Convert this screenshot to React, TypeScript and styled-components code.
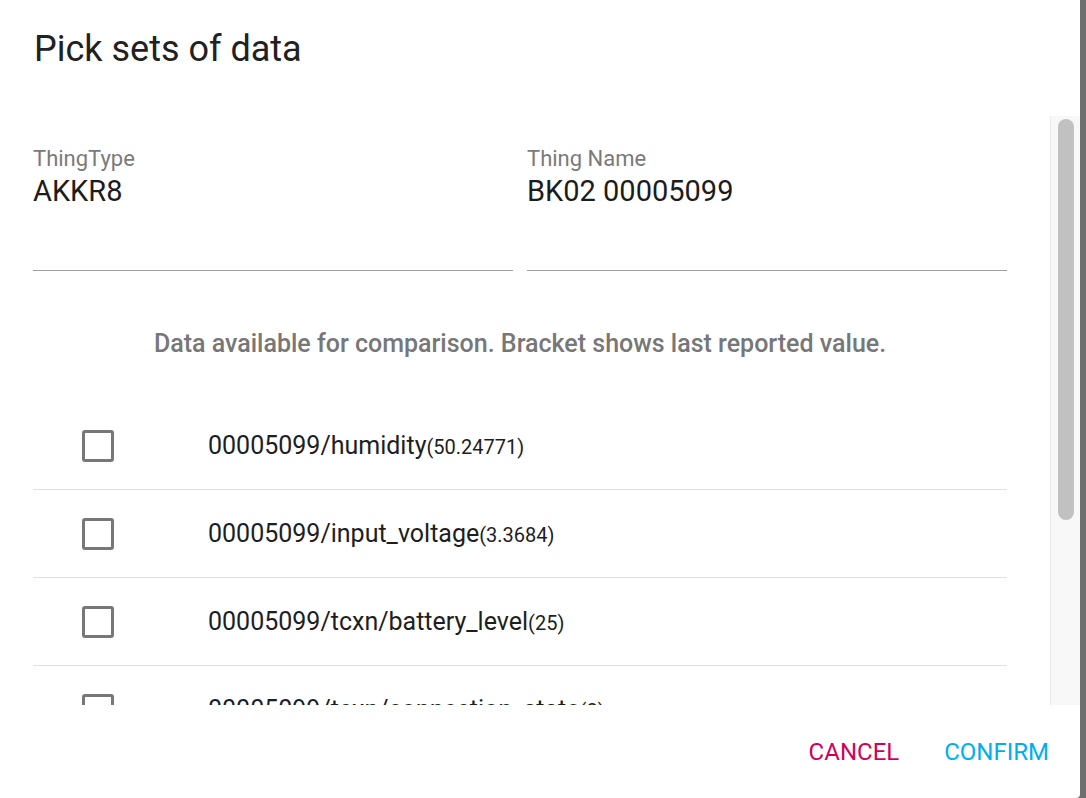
import React from "react";
import styled, { createGlobalStyle } from "styled-components";

const GlobalStyle = createGlobalStyle`
  html, body {
    margin: 0;
    padding: 0;
    height: 100%;
    background: #6f6f6f;
    overflow: hidden;
  }
  body {
    font-family: Roboto, "Noto Sans", sans-serif;
  }
`;

const Dialog = styled.div`
  width: 1080px;
  height: 798px;
  background: #ffffff;
  display: flex;
  flex-direction: column;
  border-bottom-right-radius: 4px;
`;

const Header = styled.div`
  height: 116px;
  flex: none;
  box-sizing: border-box;
  padding: 28px 34px 0;
`;

const Title = styled.h2`
  margin: 0;
  font-size: 36px;
  font-weight: 400;
  line-height: 1.2;
  color: #212121;
`;

const Body = styled.div`
  flex: 1;
  min-height: 0;
  display: flex;
`;

const ScrollArea = styled.div`
  flex: 1;
  min-width: 0;
  overflow-y: scroll;
  scrollbar-width: none;
  box-sizing: border-box;
  padding: 30px 43px 54px 33px;

  &::-webkit-scrollbar {
    display: none;
  }
`;

const Rail = styled.div`
  width: 30px;
  flex: none;
  box-sizing: border-box;
  background: #f8f8f8;
  border-left: 1px solid #ececec;
  padding: 3px 6px 0 7px;
`;

const Thumb = styled.div`
  height: 401px;
  border-radius: 8px;
  background: #c1c1c1;
`;

const Fields = styled.div`
  display: grid;
  grid-template-columns: 1fr 1fr;
  column-gap: 14px;
`;

const Field = styled.div`
  height: 124px;
  border-bottom: 1px solid #9e9e9e;
`;

const Label = styled.div`
  font-size: 22px;
  line-height: 1.2;
  color: #7a7a7a;
`;

const Value = styled.div`
  margin-top: 2px;
  font-size: 29px;
  line-height: 1.2;
  color: #1c1c1c;
`;

const Note = styled.p`
  margin: 58px 0 43px;
  text-align: center;
  font-size: 25px;
  font-weight: 500;
  line-height: 1.2;
  color: #777777;
`;

const Row = styled.label`
  display: flex;
  align-items: center;
  height: 88px;
  box-sizing: border-box;
  padding-left: 49px;
  border-bottom: 1px solid #e2e2e2;
`;

const Box = styled.span`
  width: 32px;
  height: 32px;
  flex: none;
  box-sizing: border-box;
  border: 3px solid #777777;
  border-radius: 3px;
`;

const Name = styled.span`
  margin-left: 94px;
  font-size: 25px;
  color: #1e1e1e;
`;

const Reading = styled.span`
  font-size: 20px;
`;

const Footer = styled.div`
  height: 93px;
  flex: none;
  box-sizing: border-box;
  padding: 33px 31px 0 0;
  display: flex;
  justify-content: flex-end;
  gap: 45px;
`;

const Action = styled.button<{ $tone: string }>`
  background: transparent;
  border: none;
  padding: 0;
  font-family: inherit;
  font-size: 24px;
  line-height: 1.2;
  height: 29px;
  color: ${(p) => p.$tone};
  cursor: pointer;
`;

const series = [
  { name: "00005099/humidity", value: "50.24771" },
  { name: "00005099/input_voltage", value: "3.3684" },
  { name: "00005099/tcxn/battery_level", value: "25" },
  { name: "00005099/tcxn/connection_state", value: "2" },
  { name: "00005099/temperature", value: "24.4156" },
  { name: "00005099/tcxn/cellular/rssi", value: "-71" },
];

export default function App() {
  return (
    <>
      <GlobalStyle />
      <Dialog>
        <Header>
          <Title>Pick sets of data</Title>
        </Header>
        <Body>
          <ScrollArea>
            <Fields>
              <Field>
                <Label>ThingType</Label>
                <Value>AKKR8</Value>
              </Field>
              <Field>
                <Label>Thing Name</Label>
                <Value>BK02 00005099</Value>
              </Field>
            </Fields>
            <Note>Data available for comparison. Bracket shows last reported value.</Note>
            {series.map((s) => (
              <Row key={s.name}>
                <Box />
                <Name>
                  {s.name}
                  <Reading>({s.value})</Reading>
                </Name>
              </Row>
            ))}
          </ScrollArea>
          <Rail>
            <Thumb />
          </Rail>
        </Body>
        <Footer>
          <Action $tone="#d1005d">CANCEL</Action>
          <Action $tone="#00aeef">CONFIRM</Action>
        </Footer>
      </Dialog>
    </>
  );
}
